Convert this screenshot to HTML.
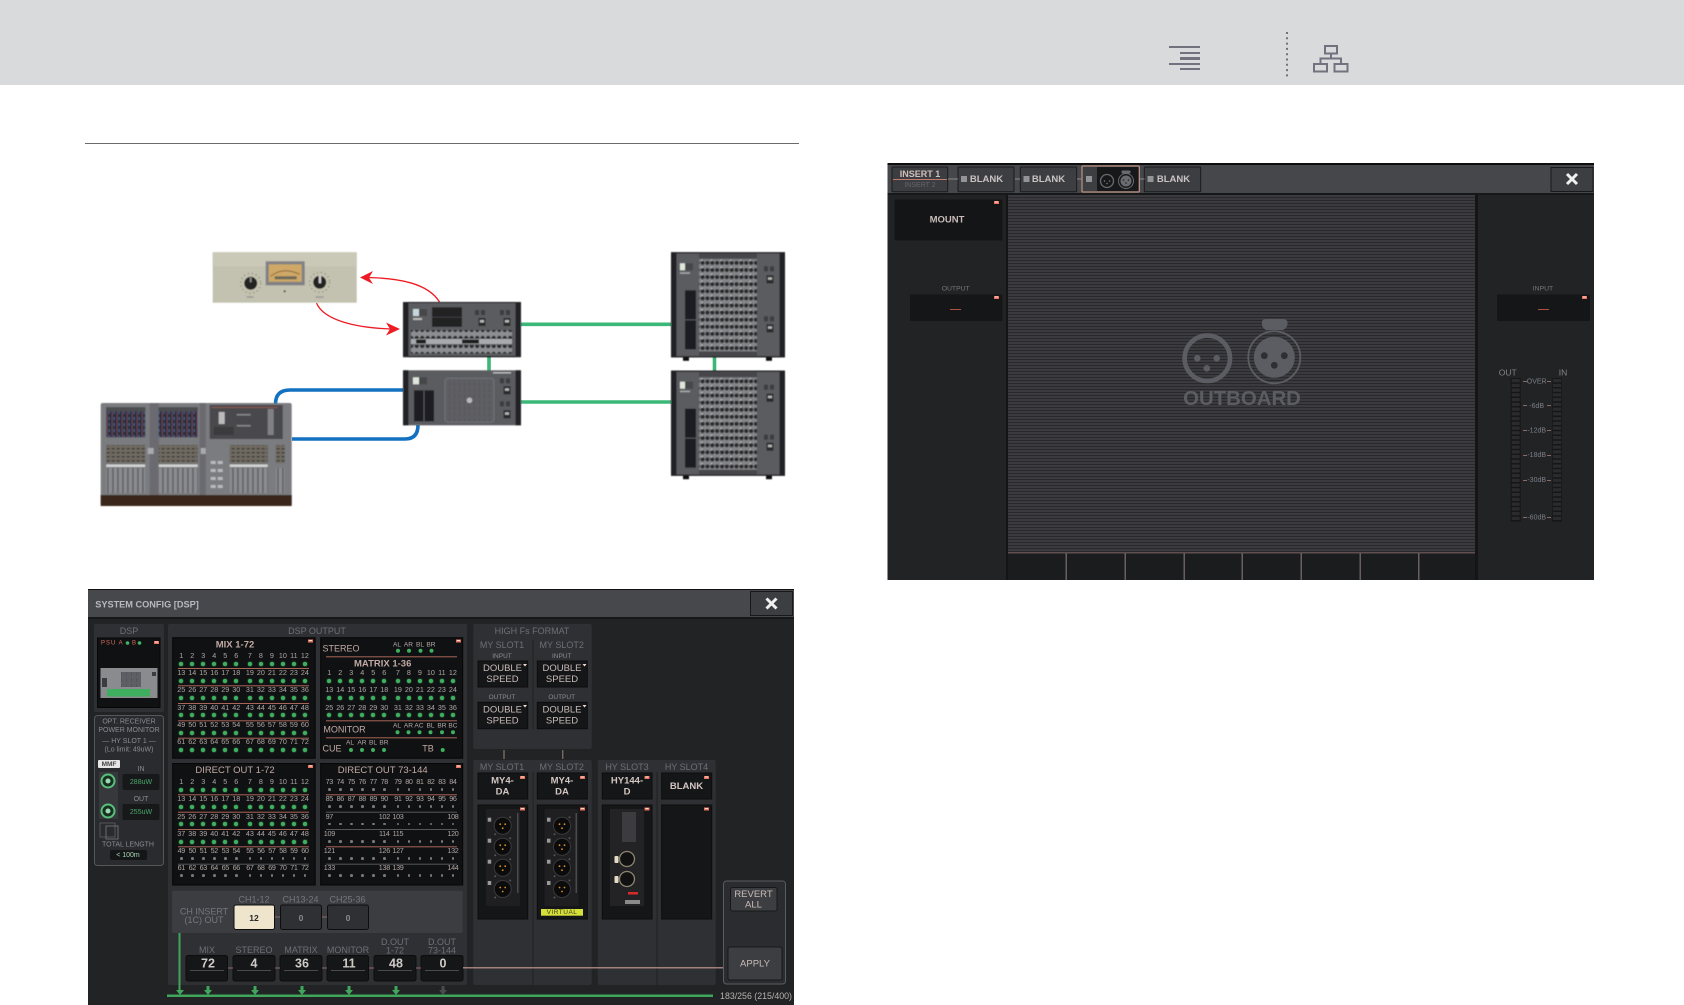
<!DOCTYPE html>
<html><head><meta charset="utf-8"><style>
html,body{margin:0;padding:0;background:#fff;width:1684px;height:1005px;overflow:hidden}
body{position:relative;font-family:"Liberation Sans",sans-serif}
#w{position:absolute;left:0;top:0;width:1684px;height:1005px;filter:blur(.3px)}
svg.m{position:absolute;left:0;top:0}
svg text{font-family:"Liberation Sans",sans-serif;text-anchor:middle;dominant-baseline:central;transform:translate(0,.6px)}
.l{fill:#6e6f77;font-size:9px}
.s{fill:#8b8b92;font-size:7px}
.w{fill:#c9bcb8;font-size:9.5px}
.b{fill:#d2c6c2;font-size:9.5px;font-weight:bold}
.v{fill:#cfc9c6;font-size:12.5px;font-weight:bold}
.y{fill:#c2aaa4;font-size:10px}
.q{fill:#b5aaa7;font-size:6.6px}
.k{fill:#151618;stroke:#0d0d0e;stroke-width:1}
.p{fill:#101113;stroke:#060607;stroke-width:1}
.d{fill:#2f3033}
.r{position:absolute;height:8px;line-height:8px;font-size:7.2px;color:#b0a6a3;white-space:nowrap}
.r i{position:relative;display:inline-block;width:11px;text-align:center;font-style:normal;vertical-align:top;height:8px}
.r i:nth-child(6){margin-right:2.6px}
.r i::after{content:"";position:absolute;left:3.5px;top:9.5px;width:4px;height:4px;border-radius:50%;background:#3fb05f;box-shadow:0 0 1.5px #4fd070}
.o{letter-spacing:-.3px}
.o i::after{left:4.2px;top:10.2px;width:2.6px;height:2.6px;background:#77777a;box-shadow:none}
</style></head><body><div id="w">
<svg class="m" width="1684" height="1005" viewBox="0 0 1684 1005" xmlns="http://www.w3.org/2000/svg">
<defs>
<filter id="bl"><feGaussianBlur stdDeviation="0.5"/></filter>
<pattern id="j" width="9.7" height="7.1" patternUnits="userSpaceOnUse"><rect width="9.7" height="7.1" fill="#85868a"/><circle cx="2.500" cy="3.500" r="2.100" fill="#29292c"/><circle cx="7.300" cy="3.500" r="2.100" fill="#29292c"/><circle cx="1.800" cy=".8" r=".6" fill="#e6e6e6"/></pattern>
<pattern id="j2" width="5.5" height="8" patternUnits="userSpaceOnUse"><rect width="5.5" height="8" fill="#8d8e92"/><circle cx="2.7" cy="4" r="2.2" fill="#2b2b2e"/></pattern>
<pattern id="fd" width="5" height="8" patternUnits="userSpaceOnUse"><rect width="5" height="8" fill="#8b8c90"/><rect x="1.5" width="1.4" height="8" fill="#5a5b5f"/></pattern>
<pattern id="fb" width="5" height="4" patternUnits="userSpaceOnUse"><rect width="5" height="4" fill="#6f6b60"/><rect x="1" y="1" width="3" height="1.500" fill="#3c3c3c"/></pattern>
<pattern id="sc" width="5" height="6" patternUnits="userSpaceOnUse"><rect width="5" height="6" fill="#2a2d3a"/><rect x="1" width="1" height="6" fill="#7a4a5a"/><rect x="3" y="2" width="1" height="3" fill="#4a6a9a"/></pattern>
<pattern id="gr" width="5" height="6" patternUnits="userSpaceOnUse"><rect width="5" height="6" fill="#5e5f64"/><rect x="1" width=".8" height="4" fill="#515257"/></pattern>
<pattern id="st" width="3" height="3" patternUnits="userSpaceOnUse"><rect width="3" height="3" fill="#3b3b3f"/><rect y="2" width="3" height="1" fill="#29292c"/></pattern>
<g id="cn"><rect x="-3.500" y="-4" width="7" height="8" fill="#2a2a2c"/><rect x="-2" y="-2" width="4" height="2.500" fill="#b8b8b8"/></g>
<g id="rack">
<rect width="114" height="105" fill="#5a5b60"/><rect width="114" height="1" fill="#000"/><rect y="104" width="114" height="1" fill="#000"/>
<rect width="5.500" height="105" fill="#222326"/><rect x="108.500" width="5.500" height="105" fill="#222326"/>
<rect x="28" y="1" width="58" height="5" fill="#46474b"/><rect x="28" y="99" width="58" height="5" fill="#46474b"/>
<rect x="28" y="7" width="58" height="92" fill="url(#j)"/>
<rect x="9" y="11" width="5" height="7" fill="#dfe7dc"/><rect x="14" y="11" width="8" height="7" fill="#45464a"/>
<rect x="9" y="20" width="10" height="1.500" fill="#aaa"/>
<rect x="14" y="38" width="11" height="59" fill="#1e1e20"/><rect x="14" y="67" width="11" height="1" fill="#5a5b60"/>
<rect x="93" y="14" width="4" height="5" fill="#3c3d41"/><rect x="99" y="14" width="4" height="5" fill="#3c3d41"/>
<rect x="93" y="64" width="4" height="5" fill="#3c3d41"/><rect x="99" y="64" width="4" height="5" fill="#3c3d41"/>
<use href="#cn" x="99" y="27"/><use href="#cn" x="99" y="76"/>
</g>
<g id="feet"><rect x="12" y="105" width="6" height="3.5" fill="#111"/><rect x="95" y="105" width="6" height="3.5" fill="#111"/></g>
<g id="xlr"><circle r="8.500" fill="#0b0b0c" stroke="#3a3a3c" stroke-width="1"/><circle cx="-2.500" cy="-1.500" r=".9" fill="#d8902c"/><circle cx="2.500" cy="-1.500" r=".9" fill="#d8902c"/><circle cy="2.500" r=".9" fill="#d8902c"/><rect x="-15" y="-8" width="3.500" height="4" fill="#999"/><circle cx="-7.500" cy="8.500" r="1" fill="#555"/><circle cx="7.500" cy="-8.500" r="1" fill="#555"/></g>
<g id="card"><rect width="34" height="97" fill="#1f1f21"/><rect x="31" y="4" width="1.500" height="80" fill="#4a4a4d"/></g>
<g id="tg"><rect width="5" height="3" fill="#e8735f"/><rect x="1" y=".5" width="3" height="1" fill="#f7dcd6"/></g>
</defs>

<!-- header -->
<rect width="1684" height="85" fill="#d9dadc"/>
<g fill="#72727f"><rect x="1169" y="46" width="31" height="2"/><rect x="1180" y="52" width="20" height="2"/><rect x="1180" y="57" width="20" height="3"/><rect x="1169" y="63" width="31" height="2"/><rect x="1180" y="68" width="20" height="2"/></g>
<line x1="1287" y1="32" x2="1287" y2="77" stroke="#72727f" stroke-width="2" stroke-dasharray="2 3.3"/>
<g fill="none" stroke="#72727f" stroke-width="2"><rect x="1325" y="46" width="12" height="7.5"/><rect x="1314" y="64" width="13" height="7.5"/><rect x="1334.500" y="64" width="13" height="7.5"/><path d="M1331 53.500V58.500M1320.500 64V58.500H1341V64"/></g>
<rect x="85" y="143" width="714" height="1" fill="#6b6b6b"/>

<!-- diagram -->
<g fill="none" stroke-width="3.6">
<path d="M521 324.300H671M521 402H671" stroke="#3bb777"/>
<path d="M489 356V371M714.500 356V371" stroke="#3bb777"/>
<path d="M403 390H290Q275.500 390 275.500 404M292 439H405Q418 439 418 425" stroke="#1271c0"/>
</g>
<g fill="none" stroke="#ed1c24" stroke-width="1.300"><path d="M439.500 302C428 283 398 278 366 277.500"/><path d="M316.500 303C324 321 358 328 392 329"/></g>
<path d="M360 277.500L373 271L369 277.700L373 284ZM400 329L386 322.500L390 329L386 335.500Z" fill="#ed1c24"/>
<g filter="url(#bl)">
<g transform="translate(212.700 252.300)"><rect width="144" height="50.400" fill="#c3c1af"/><rect width="144" height="14" fill="#cac8b7"/><rect x="53" y="9" width="39" height="24" fill="#808184"/><rect x="56" y="12" width="33" height="17.500" fill="#cfa867"/><path d="M58 24Q70 14 87 22" fill="none" stroke="#8a6a3a"/><rect x="62" y="24" width="22" height="3" fill="#6c6a58"/>
<circle cx="38" cy="31" r="6.500" fill="#242424"/><circle cx="107" cy="30" r="6.500" fill="#242424"/><rect x="106" y="23" width="2.500" height="8" fill="#cfcfcf"/><rect x="37" y="25" width="2" height="5" fill="#888"/><circle cx="38" cy="31" r="10" fill="none" stroke="#6a6a60" stroke-dasharray="1 3"/><circle cx="107" cy="30" r="10" fill="none" stroke="#6a6a60" stroke-dasharray="1 3"/><circle cx="72" cy="39" r="1" fill="#222"/><rect x="34" y="44" width="7" height="1.500" fill="#999"/><rect x="103" y="44" width="8" height="1.500" fill="#999"/></g>

<g transform="translate(403 302)"><rect width="118" height="55" fill="#5a5b60"/><rect width="118" height="1" fill="#000"/><rect y="54" width="118" height="1.200" fill="#000"/><rect width="5.500" height="55" fill="#222326"/><rect x="112.500" width="5.500" height="55" fill="#222326"/>
<rect x="29" y="5.300" width="30" height="9.500" fill="#222224"/><rect x="29" y="15.300" width="30" height="9.500" fill="#222224"/><rect x="10" y="7" width="6" height="7" fill="#c7d6dc"/><rect x="16" y="7" width="8" height="7" fill="#45464a"/><rect x="10" y="16" width="9" height="2" fill="#bbb"/><rect x="72" y="8" width="4" height="5" fill="#3c3d41"/><rect x="78" y="8" width="4" height="5" fill="#3c3d41"/><rect x="97" y="8" width="4" height="5" fill="#3c3d41"/><rect x="103" y="8" width="4" height="5" fill="#3c3d41"/><use href="#cn" x="79" y="20"/><use href="#cn" x="104" y="20"/>
<rect x="8" y="28" width="101" height="8.500" fill="url(#j2)"/><rect x="8" y="43" width="101" height="8.500" fill="url(#j2)"/><rect x="8" y="37" width="101" height="5" fill="#a9aaad"/><rect x="13" y="37.500" width="10" height="4" fill="#1b1b1d"/><rect x="59" y="37.500" width="17" height="4" fill="#1b1b1d"/></g>

<g transform="translate(403 370.300)"><rect width="118" height="55" fill="#5a5b60"/><rect width="5.500" height="55" fill="#222326"/><rect x="112.500" width="5.500" height="55" fill="#222326"/>
<rect x="10" y="7" width="6" height="7" fill="#dfe7dc"/><rect x="16" y="7" width="8" height="7" fill="#45464a"/><rect x="11" y="20" width="20" height="31" fill="#1e1e20"/><rect x="20.500" y="20" width="1" height="31" fill="#5a5b60"/>
<rect x="42" y="8" width="49" height="44" rx="3" fill="url(#gr)" stroke="#737478"/><circle cx="66.500" cy="30" r="2.800" fill="#b9b9b9"/><rect x="97" y="8" width="4" height="5" fill="#3c3d41"/><rect x="103" y="8" width="4" height="5" fill="#3c3d41"/><rect x="97" y="31" width="4" height="5" fill="#3c3d41"/><rect x="103" y="31" width="4" height="5" fill="#3c3d41"/><use href="#cn" x="104" y="20"/><use href="#cn" x="104" y="44"/><rect x="90" y="2" width="18" height="1" fill="#ddd"/></g>

<use href="#rack" x="671" y="252.300"/><use href="#feet" x="671" y="252.300"/>
<use href="#rack" x="671" y="370.700"/><use href="#feet" x="671" y="370.700"/>

<g transform="translate(100.700 403)"><rect width="191" height="103" rx="2" fill="#7a7b7f"/><rect x="49" y="0" width="9" height="92" fill="#6a6b6f"/><rect x="99" y="0" width="6" height="92" fill="#6a6b6f"/>
<rect x="5.500" y="4.300" width="39" height="30" fill="url(#sc)"/><rect x="58" y="4.300" width="39" height="30" fill="url(#sc)"/><rect x="5.500" y="4.300" width="39" height="4" fill="#4c4d50"/><rect x="58" y="4.300" width="39" height="4" fill="#4c4d50"/>
<rect x="109" y="2" width="73" height="34" fill="#48494d"/><rect x="118" y="9" width="6" height="12" fill="#bbb"/><rect x="111" y="4" width="66" height="1" fill="#8c5a50"/><rect x="136" y="11" width="14" height="1.500" fill="#888"/><rect x="136" y="22" width="14" height="1.500" fill="#888"/><rect x="167" y="6" width="6" height="26" fill="#808184"/><rect x="113" y="24" width="20" height="8" fill="#3a3b3e"/>
<rect x="5.500" y="42" width="39" height="18" fill="url(#fb)"/><rect x="58" y="42" width="39" height="18" fill="url(#fb)"/><rect x="129" y="42" width="38" height="18" fill="url(#fb)"/><rect x="175" y="42" width="9" height="18" fill="url(#fb)"/>
<rect x="5.500" y="65" width="39" height="25" fill="url(#fd)"/><rect x="58" y="65" width="39" height="25" fill="url(#fd)"/><rect x="129" y="65" width="38" height="25" fill="url(#fd)"/><rect x="175" y="65" width="9" height="25" fill="url(#fd)"/>
<rect x="5.500" y="61.500" width="39" height="2.500" fill="#d2d2d2"/><rect x="58" y="61.500" width="39" height="2.500" fill="#d2d2d2"/><rect x="129" y="61.500" width="38" height="2.500" fill="#d2d2d2"/>
<rect x="47" y="45" width="6" height="6" fill="#a8a9ab"/><rect x="100" y="45" width="5" height="6" fill="#a8a9ab"/>
<g fill="#b9babc"><rect x="110" y="58" width="5" height="3"/><rect x="117" y="58" width="5" height="3"/><rect x="110" y="66" width="5" height="3"/><rect x="117" y="66" width="5" height="3"/><rect x="110" y="74" width="5" height="3"/><rect x="117" y="74" width="5" height="3"/><rect x="110" y="82" width="5" height="3"/><rect x="117" y="82" width="5" height="3"/></g>
<rect x="0" y="92" width="191" height="11" fill="#3b281b"/></g>
</g>

<!-- SYSTEM CONFIG -->
<rect x="88" y="589" width="706" height="416" fill="#222325"/>
<rect x="88" y="589" width="706" height="1" fill="#111"/>
<rect x="88" y="590" width="706" height="27" fill="#47484c"/><rect x="88" y="617" width="706" height="2" fill="#17181a"/>
<text x="147" y="603.800" fill="#b8b8c0" style="font-size:9.200px;font-weight:bold">SYSTEM CONFIG  [DSP]</text>
<rect x="750.500" y="591.500" width="42" height="24" fill="#3d3e42" stroke="#17181a"/>
<path d="M766.500 598.500L776.500 608.500M776.500 598.500L766.500 608.500" stroke="#f0f0f0" stroke-width="3"/>

<rect x="94" y="624" width="70" height="88" rx="2" class="d"/><text x="129" y="630.500" class="l">DSP</text>
<rect x="97.500" y="638" width="62.500" height="69.500" class="p"/>
<text x="101" y="642.800" style="text-anchor:start;font-size:6px;fill:#d7705f;letter-spacing:1px">PSU A</text>
<circle cx="127.500" cy="643" r="1.800" fill="#45b565"/><text x="134" y="642.800" style="font-size:6px;fill:#d7705f">B</text><circle cx="139.500" cy="643" r="1.800" fill="#45b565"/>
<use href="#tg" x="154" y="641"/>
<rect x="100.500" y="668" width="57" height="30" fill="#8a8b8f"/><rect x="121" y="672" width="20" height="15" fill="url(#gr)"/><rect x="107" y="689" width="43" height="7.500" fill="#3fae5e"/><rect x="102" y="678" width="5" height="9" fill="#3a3b3e"/><rect x="152" y="672" width="4" height="4" fill="#3a3b3e"/>

<rect x="94.500" y="715.500" width="69" height="150" rx="3" fill="#2a2b2e" stroke="#56575b"/>
<text x="129" y="721.500" class="s">OPT. RECEIVER</text><text x="129" y="730" class="s">POWER MONITOR</text><text x="129" y="741" class="s">— HY SLOT 1 —</text><text x="129" y="749.500" class="s">(Lo limit: 49uW)</text>
<rect x="98" y="760" width="22" height="8" rx="1" fill="#e6e6e6"/><text x="109" y="764" style="font-size:6.500px;font-weight:bold;fill:#444">MMF</text>
<rect x="99" y="772" width="19" height="47" fill="#37383b"/>
<circle cx="108" cy="781" r="6.500" fill="#173020" stroke="#58c07c" stroke-width="2"/><circle cx="108" cy="781" r="2.500" fill="#9adcb0"/>
<circle cx="108" cy="811" r="6.500" fill="#173020" stroke="#58c07c" stroke-width="2"/><circle cx="108" cy="811" r="2.500" fill="#9adcb0"/>
<rect x="100" y="823" width="15" height="14" fill="none" stroke="#55565a"/><rect x="106" y="826" width="12" height="13" fill="none" stroke="#6a6b6f"/>
<text x="141" y="769" class="s">IN</text><rect x="122.500" y="774" width="37" height="16" rx="2" fill="#17181a"/><text x="141" y="782" style="font-size:7px;fill:#4aa86a">288uW</text>
<text x="141" y="799" class="s">OUT</text><rect x="122.500" y="804" width="37" height="16" rx="2" fill="#17181a"/><text x="141" y="812" style="font-size:7px;fill:#4aa86a">255uW</text>
<text x="128" y="844.500" class="s">TOTAL LENGTH</text><rect x="110" y="850" width="37" height="10" rx="2" fill="#141517"/><text x="128" y="855" style="font-size:7px;fill:#a9d6b4">&lt; 100m</text>

<rect x="168" y="624" width="299" height="361" rx="2" class="d"/><text x="317" y="630.500" class="l">DSP OUTPUT</text>
<rect x="172.700" y="637.700" width="142.500" height="120.500" class="p"/>
<rect x="320.700" y="637.700" width="142" height="120.500" class="p"/>
<rect x="172.700" y="763.500" width="142.500" height="121.500" class="p"/>
<rect x="320.700" y="763.500" width="142" height="121.500" class="p"/>
<use href="#tg" x="308" y="639.500"/><use href="#tg" x="456" y="639.500"/><use href="#tg" x="308" y="765"/><use href="#tg" x="456" y="765"/>
<text x="235" y="644.200" class="y" style="font-size:9.500px;font-weight:bold">MIX 1-72</text>
<text x="341" y="648" class="y" style="font-size:9px">STEREO</text>
<text x="382.700" y="663.500" class="y" style="font-size:9.500px;font-weight:bold">MATRIX 1-36</text>
<text x="344.500" y="729" class="y" style="font-size:9px">MONITOR</text><text x="332" y="747.700" class="y" style="font-size:9px">CUE</text><text x="428" y="748" class="y" style="font-size:9px">TB</text>
<text x="235" y="770" class="y" style="font-size:9.500px">DIRECT OUT 1-72</text><text x="382.700" y="770" class="y" style="font-size:9.500px">DIRECT OUT 73-144</text>
<text x="397" y="644.300" class="q">AL</text><text x="408.500" y="644.300" class="q">AR</text><text x="420" y="644.300" class="q">BL</text><text x="431" y="644.300" class="q">BR</text>
<text x="397" y="725.300" class="q">AL</text><text x="408.500" y="725.300" class="q">AR</text><text x="419" y="725.300" class="q">AC</text><text x="430.500" y="725.300" class="q">BL</text><text x="442" y="725.300" class="q">BR</text><text x="453" y="725.300" class="q">BC</text>
<text x="350" y="742.300" class="q">AL</text><text x="362" y="742.300" class="q">AR</text><text x="373" y="742.300" class="q">BL</text><text x="384" y="742.300" class="q">BR</text>
<g fill="#3fb05f">
<circle cx="398" cy="650.700" r="2"/><circle cx="409" cy="650.700" r="2"/><circle cx="420.500" cy="650.700" r="2"/><circle cx="431.500" cy="650.700" r="2"/>
<circle cx="397.500" cy="732.300" r="2"/><circle cx="408.500" cy="732.300" r="2"/><circle cx="419.500" cy="732.300" r="2"/><circle cx="430.500" cy="732.300" r="2"/><circle cx="442" cy="732.300" r="2"/><circle cx="453" cy="732.300" r="2"/>
<circle cx="351" cy="750" r="2"/><circle cx="362" cy="750" r="2"/><circle cx="373" cy="750" r="2"/><circle cx="384" cy="750" r="2"/><circle cx="442.700" cy="750" r="2"/>
</g>
<g fill="#a86457">
<rect x="178" y="668" width="131" height="1"/><rect x="178" y="685.300" width="131" height="1"/><rect x="178" y="703" width="131" height="1"/><rect x="178" y="720.300" width="131" height="1"/><rect x="178" y="737.700" width="131" height="1"/>
<rect x="326" y="656.300" width="131" height="1"/><rect x="326" y="720.300" width="131" height="1"/><rect x="326" y="737.300" width="131" height="1"/>
<rect x="178" y="794.300" width="131" height="1"/><rect x="178" y="811.700" width="131" height="1"/><rect x="178" y="829" width="131" height="1"/><rect x="178" y="846.300" width="131" height="1"/>
<rect x="326" y="794.300" width="131" height="1"/><rect x="326" y="846.300" width="131" height="1"/>
</g>
<g fill="#55565a"><rect x="178" y="863.700" width="131" height="1"/><rect x="326" y="811.700" width="131" height="1"/><rect x="326" y="829" width="131" height="1"/><rect x="326" y="863.700" width="131" height="1"/></g>

<rect x="172" y="890.700" width="290.700" height="42.300" rx="2" fill="#3c3d41"/>
<text x="204" y="910.700" style="font-size:9px;fill:#76777e">CH INSERT</text><text x="204" y="919.500" style="font-size:9px;fill:#76777e">(1C) OUT</text>
<text x="254" y="899" style="font-size:9px;fill:#76777e">CH1-12</text><text x="300.500" y="899" style="font-size:9px;fill:#76777e">CH13-24</text><text x="347.500" y="899" style="font-size:9px;fill:#76777e">CH25-36</text>
<rect x="234" y="905" width="40.500" height="24.500" rx="2" fill="#efe5cd" stroke="#0e0e0f"/><text x="254" y="917.500" style="font-size:8.500px;font-weight:bold;fill:#262626">12</text>
<rect x="280.500" y="905" width="41" height="24.500" rx="2" fill="#2f3033" stroke="#0e0e0f"/><text x="301" y="917.500" style="font-size:8.500px;font-weight:bold;fill:#8b8b8b">0</text>
<rect x="327.500" y="905" width="41" height="24.500" rx="2" fill="#2f3033" stroke="#0e0e0f"/><text x="348" y="917.500" style="font-size:8.500px;font-weight:bold;fill:#8b8b8b">0</text>
<rect x="275" y="916.500" width="5" height="1" fill="#8c6a64"/><rect x="322" y="916.500" width="5" height="1" fill="#8c6a64"/>

<text x="207" y="949.500" class="l">MIX</text><text x="254" y="949.500" class="l">STEREO</text><text x="301" y="949.500" class="l">MATRIX</text><text x="348" y="949.500" class="l">MONITOR</text><text x="395" y="941.500" class="l">D.OUT</text><text x="395" y="950" class="l">1-72</text><text x="442" y="941.500" class="l">D.OUT</text><text x="442" y="950" class="l">73-144</text>
<g class="k"><rect x="186" y="955.500" width="41.500" height="25.500" rx="2"/><rect x="233" y="955.500" width="42" height="25.500" rx="2"/><rect x="280" y="955.500" width="42" height="25.500" rx="2"/><rect x="327" y="955.500" width="41.500" height="25.500" rx="2"/><rect x="374" y="955.500" width="42" height="25.500" rx="2"/><rect x="421" y="955.500" width="42" height="25.500" rx="2"/></g>
<text x="208" y="963" class="v">72</text><text x="254" y="963" class="v">4</text><text x="302" y="963" class="v">36</text><text x="349" y="963" class="v">11</text><text x="396" y="963" class="v">48</text><text x="443" y="963" class="v">0</text>
<g fill="#4a4b4f"><rect x="190" y="970" width="34" height="1"/><rect x="237" y="970" width="34" height="1"/><rect x="284" y="970" width="34" height="1"/><rect x="331" y="970" width="34" height="1"/><rect x="378" y="970" width="34" height="1"/><rect x="425" y="970" width="34" height="1"/></g>
<g fill="#8c6a64"><rect x="228" y="967.500" width="5" height="1"/><rect x="275" y="967.500" width="5" height="1"/><rect x="322" y="967.500" width="5" height="1"/><rect x="369" y="967.500" width="5" height="1"/><rect x="416" y="967.500" width="5" height="1"/></g>

<rect x="473.300" y="624" width="118.400" height="125" rx="2" class="d"/><rect x="532.500" y="640" width="1" height="89" fill="#1e1f21"/>
<text x="532" y="630.500" class="l">HIGH Fs FORMAT</text>
<text x="502" y="644.500" class="l">MY SLOT1</text><text x="561.700" y="644.500" class="l">MY SLOT2</text>
<text x="502" y="656" class="s" style="font-size:6.500px">INPUT</text><text x="561.700" y="656" class="s" style="font-size:6.500px">INPUT</text><text x="502" y="697" class="s" style="font-size:6.500px">OUTPUT</text><text x="561.700" y="697" class="s" style="font-size:6.500px">OUTPUT</text>
<g class="k"><rect x="478" y="661" width="49.700" height="26"/><rect x="537.300" y="661" width="50" height="26"/><rect x="478" y="702.300" width="49.700" height="26.400"/><rect x="537.300" y="702.300" width="50" height="26.400"/></g>
<text x="502.500" y="668" class="w">DOUBLE</text><text x="502.500" y="679" class="w">SPEED</text><text x="562" y="668" class="w">DOUBLE</text><text x="562" y="679" class="w">SPEED</text>
<text x="502.500" y="709.500" class="w">DOUBLE</text><text x="502.500" y="720.500" class="w">SPEED</text><text x="562" y="709.500" class="w">DOUBLE</text><text x="562" y="720.500" class="w">SPEED</text>
<g fill="#f0d8d0"><path d="M523 664h4l-2 2.500z"/><path d="M582.500 664h4l-2 2.500z"/><path d="M523 705h4l-2 2.500z"/><path d="M582.500 705h4l-2 2.500z"/></g>
<rect x="503.500" y="750" width="1" height="9" fill="#9c8680"/><rect x="562.300" y="750" width="1" height="9" fill="#9c8680"/>

<rect x="473.300" y="760" width="118.400" height="225" rx="2" class="d"/><rect x="532.500" y="772" width="1" height="213" fill="#1e1f21"/>
<rect x="597.700" y="760" width="118" height="225" rx="2" class="d"/><rect x="656.500" y="772" width="1" height="213" fill="#1e1f21"/>
<text x="502" y="766.500" class="l">MY SLOT1</text><text x="561.700" y="766.500" class="l">MY SLOT2</text><text x="627" y="766.500" class="l">HY SLOT3</text><text x="686.500" y="766.500" class="l">HY SLOT4</text>
<g class="k"><rect x="478" y="773" width="49.700" height="26"/><rect x="537.300" y="773" width="50" height="26"/><rect x="602.300" y="773" width="49.700" height="26"/><rect x="661.700" y="773" width="50" height="26"/>
<rect x="478" y="805" width="49.700" height="114"/><rect x="537.300" y="805" width="50" height="114"/><rect x="602.300" y="805" width="49.700" height="114"/><rect x="661.700" y="805" width="50" height="114"/></g>
<text x="502.500" y="780.500" class="b">MY4-</text><text x="502.500" y="791.500" class="b">DA</text><text x="562" y="780.500" class="b">MY4-</text><text x="562" y="791.500" class="b">DA</text><text x="627" y="780.500" class="b">HY144-</text><text x="627" y="791.500" class="b">D</text><text x="686.500" y="786" class="b">BLANK</text>
<use href="#tg" x="520" y="776"/><use href="#tg" x="580" y="776"/><use href="#tg" x="644.500" y="776"/><use href="#tg" x="704" y="776"/><use href="#tg" x="520" y="807.500"/><use href="#tg" x="580" y="807.500"/><use href="#tg" x="644.500" y="807.500"/><use href="#tg" x="704" y="807.500"/>
<use href="#card" x="486" y="809"/><use href="#card" x="544.500" y="809"/>
<use href="#xlr" x="502.700" y="825.700"/><use href="#xlr" x="502.700" y="846.700"/><use href="#xlr" x="502.700" y="867.700"/><use href="#xlr" x="502.700" y="889"/>
<use href="#xlr" x="562" y="825.700"/><use href="#xlr" x="562" y="846.700"/><use href="#xlr" x="562" y="867.700"/><use href="#xlr" x="562" y="889"/>
<rect x="541" y="909" width="42" height="6.700" fill="#d6e03a"/><text x="562" y="912" style="font-size:6.500px;fill:#3b3b20;letter-spacing:.5px">VIRTUAL</text>
<rect x="610" y="809" width="34" height="97" fill="#232325"/><rect x="622" y="812" width="14" height="30" fill="#3c3c40"/>
<circle cx="627" cy="859" r="7.500" fill="#111" stroke="#8f8570" stroke-width="1.300"/><circle cx="627" cy="879" r="7.500" fill="#111" stroke="#8f8570" stroke-width="1.300"/><rect x="614.500" y="856" width="4" height="7" rx="1" fill="#e3dcc8"/><rect x="614.500" y="876" width="4" height="7" rx="1" fill="#e3dcc8"/><rect x="628" y="892" width="10" height="2.500" fill="#d92a2a"/><rect x="625" y="900" width="15" height="4" fill="#8a8a8a"/>

<rect x="723.500" y="881" width="62" height="103" rx="3" fill="#2b2c2f" stroke="#5b5c60"/>
<rect x="730.500" y="887.500" width="46.500" height="23.500" rx="2" fill="#3d3e42" stroke="#17181a"/>
<text x="753.500" y="894" class="w">REVERT</text><text x="753.500" y="904.500" class="w">ALL</text>
<rect x="728" y="947" width="54" height="33" rx="2" fill="#3d3e42" stroke="#17181a"/><text x="755" y="963.500" class="w">APPLY</text>
<rect x="463" y="967.200" width="260" height="1.200" fill="#c2968e"/>

<rect x="167" y="994.500" width="546" height="2.500" fill="#3fa65c"/>
<rect x="178.500" y="933" width="2" height="60" fill="#3fa65c"/>
<path d="M176 990H184L180 995Z" fill="#3fa65c"/>
<g fill="#3fa65c"><path d="M206.500 986H209.500V990H212L208 995L204 990H206.500Z"/><path d="M253.500 986H256.500V990H259L255 995L251 990H253.500Z"/><path d="M300.500 986H303.500V990H306L302 995L298 990H300.500Z"/><path d="M347.500 986H350.500V990H353L349 995L345 990H347.500Z"/><path d="M394.500 986H397.500V990H400L396 995L392 990H394.500Z"/></g>
<path d="M441.500 986H444.500V990H447L443 995L439 990H441.500Z" fill="#4a4b4f"/>
<text x="756" y="995.500" style="font-size:8.800px;fill:#b8b2b0">183/256  (215/400)</text>

<!-- OUTBOARD panel -->
<rect x="887.500" y="163" width="706.500" height="417" fill="#222325"/>
<rect x="887.500" y="163" width="706.500" height="2" fill="#0e0e0f"/>
<rect x="887.500" y="165" width="706.500" height="28" fill="#46474b"/><rect x="887.500" y="193" width="706.500" height="2" fill="#17181a"/>
<rect x="892" y="167" width="55.700" height="24.700" rx="1" fill="#3c3d41" stroke="#1b1b1d"/>
<text x="920" y="173.500" style="font-size:9px;font-weight:bold;fill:#d0c0bc">INSERT 1</text><rect x="893" y="179" width="54" height="1" fill="#c07a6e"/><text x="920" y="185" style="font-size:7px;fill:#65666c">INSERT 2</text>
<g fill="#3d3e42" stroke="#1b1b1d"><rect x="958" y="167" width="56" height="24.700" rx="1"/><rect x="1020.300" y="167" width="56.400" height="24.700" rx="1"/><rect x="1144.300" y="167" width="56.400" height="24.700" rx="1"/></g>
<rect x="1082" y="166" width="57.300" height="26" rx="1" fill="#3d3e42" stroke="#d8a08e"/>
<rect x="1097" y="167" width="41.500" height="24" fill="#17181a"/>
<g fill="#949498"><rect x="961" y="176" width="6" height="6"/><rect x="1023.500" y="176" width="6" height="6"/><rect x="1086" y="176" width="6" height="6"/><rect x="1147.500" y="176" width="6" height="6"/></g>
<g fill="#8a8a8f"><rect x="948" y="178.500" width="10" height="1"/><rect x="1015" y="178.500" width="5" height="1"/><rect x="1077" y="178.500" width="5" height="1"/><rect x="1139.500" y="178.500" width="5" height="1"/></g>
<text x="986.500" y="179" style="font-size:9.500px;font-weight:bold;fill:#c9c3c4">BLANK</text><text x="1048.500" y="179" style="font-size:9.500px;font-weight:bold;fill:#c9c3c4">BLANK</text><text x="1173.500" y="179" style="font-size:9.500px;font-weight:bold;fill:#c9c3c4">BLANK</text>
<circle cx="1107" cy="181" r="6.500" fill="none" stroke="#6a6b70" stroke-width="1.300"/><circle cx="1104.500" cy="181" r=".8" fill="#7a7b80"/><circle cx="1109.500" cy="181" r=".8" fill="#7a7b80"/><circle cx="1107" cy="183.500" r=".8" fill="#7a7b80"/>
<circle cx="1126" cy="181" r="7.500" fill="none" stroke="#6a6b70"/><circle cx="1126" cy="181" r="5.500" fill="#6a6b70"/><rect x="1121.500" y="170.500" width="9" height="3" rx="1" fill="#6a6b70"/><circle cx="1123.500" cy="180" r=".8" fill="#222"/><circle cx="1128.500" cy="180" r=".8" fill="#222"/><circle cx="1126" cy="183" r=".8" fill="#222"/>
<rect x="1551" y="167.500" width="42" height="24" fill="#3d3e42" stroke="#17181a"/>
<path d="M1567 174L1577 184M1577 174L1567 184" stroke="#f0f0f0" stroke-width="3"/>

<rect x="894.500" y="199.500" width="108" height="41" rx="1" fill="#141517"/><text x="947" y="219.500" style="font-size:9.500px;font-weight:bold;fill:#c9bcb8">MOUNT</text><use href="#tg" x="994" y="201"/>
<text x="955.700" y="288.500" style="font-size:6.800px;fill:#77787e">OUTPUT</text>
<rect x="910" y="294.500" width="92.500" height="26.500" rx="1" fill="#151618"/><rect x="950" y="309" width="11" height="1" fill="#b05040"/><use href="#tg" x="994" y="296"/>
<rect x="1006" y="195" width="2" height="385" fill="#151516"/>
<rect x="1008" y="195" width="467" height="357" fill="url(#st)"/>
<rect x="1475" y="195" width="3" height="385" fill="#151516"/>
<rect x="1008" y="552" width="467" height="1.500" fill="#5e5050"/>
<rect x="1008" y="553.500" width="467" height="26.500" fill="#1b1c1e"/>
<g fill="#6b5f5d"><rect x="1065.500" y="553" width="1.500" height="27"/><rect x="1124.500" y="553" width="1.500" height="27"/><rect x="1183.500" y="553" width="1.500" height="27"/><rect x="1241.500" y="553" width="1.500" height="27"/><rect x="1300.500" y="553" width="1.500" height="27"/><rect x="1359.500" y="553" width="1.500" height="27"/><rect x="1418" y="553" width="1.500" height="27"/></g>

<circle cx="1207.300" cy="358.300" r="22.700" fill="none" stroke="#5c5d62" stroke-width="4.600"/><circle cx="1197.300" cy="358.300" r="3.300" fill="#5c5d62"/><circle cx="1216.700" cy="358.300" r="3.300" fill="#5c5d62"/><circle cx="1206.800" cy="368.300" r="3.300" fill="#5c5d62"/>
<circle cx="1274.300" cy="357.300" r="26" fill="none" stroke="#5c5d62" stroke-width="1.800"/><circle cx="1274.300" cy="357.300" r="20.500" fill="#5c5d62"/>
<path d="M1262 324Q1261 319 1266 319H1283Q1288 319 1287.500 324Q1287 328 1283 330L1266 330Q1262 328 1262 324Z" fill="#5c5d62"/>
<circle cx="1264.300" cy="355.700" r="3.400" fill="#2f2f33"/><circle cx="1284.300" cy="355.700" r="3.400" fill="#2f2f33"/><circle cx="1274.300" cy="365.300" r="3.400" fill="#2f2f33"/>
<text x="1242" y="398.500" style="font-size:20.400px;font-weight:bold;fill:#5c5d62">OUTBOARD</text>

<text x="1543" y="288.500" style="font-size:6.800px;fill:#77787e">INPUT</text>
<rect x="1497" y="294.500" width="93" height="26.500" rx="1" fill="#151618"/><rect x="1538" y="309" width="11" height="1" fill="#b05040"/><use href="#tg" x="1582" y="296"/>

<text x="1507.700" y="371.700" style="font-size:8.500px;fill:#84848a">OUT</text><text x="1563" y="371.700" style="font-size:8.500px;fill:#84848a">IN</text>
<rect x="1510.700" y="378" width="10" height="143.700" fill="#161618"/><rect x="1552.300" y="378" width="9.400" height="143.700" fill="#161618"/>
<line x1="1515.700" y1="379" x2="1515.700" y2="521" stroke="#2b2b2d" stroke-width="8" stroke-dasharray="3.200 1.550"/>
<line x1="1557" y1="379" x2="1557" y2="521" stroke="#2b2b2d" stroke-width="8" stroke-dasharray="3.200 1.550"/>
<text x="1536.700" y="381.500" style="font-size:7px;fill:#7d7f88">OVER</text><text x="1536.700" y="405.700" style="font-size:7px;fill:#7d7f88">-6dB</text><text x="1536.700" y="430.500" style="font-size:7px;fill:#7d7f88">-12dB</text><text x="1536.700" y="455" style="font-size:7px;fill:#7d7f88">-18dB</text><text x="1536.700" y="480" style="font-size:7px;fill:#7d7f88">-30dB</text><text x="1536.700" y="517.500" style="font-size:7px;fill:#7d7f88">-60dB</text>
<g fill="#8a6a66"><rect x="1523" y="381" width="4" height="1"/><rect x="1547" y="381" width="4" height="1"/><rect x="1523" y="405" width="4" height="1"/><rect x="1547" y="405" width="4" height="1"/><rect x="1523" y="430" width="4" height="1"/><rect x="1547" y="430" width="4" height="1"/><rect x="1523" y="455" width="4" height="1"/><rect x="1547" y="455" width="4" height="1"/><rect x="1523" y="480" width="4" height="1"/><rect x="1547" y="480" width="4" height="1"/><rect x="1523" y="517" width="4" height="1"/><rect x="1547" y="517" width="4" height="1"/></g>
</svg>

<!-- MIX 1-72 -->
<div class="r" style="left:175.800px;top:652px"><i>1</i><i>2</i><i>3</i><i>4</i><i>5</i><i>6</i><i>7</i><i>8</i><i>9</i><i>10</i><i>11</i><i>12</i></div>
<div class="r" style="left:175.800px;top:669.300px"><i>13</i><i>14</i><i>15</i><i>16</i><i>17</i><i>18</i><i>19</i><i>20</i><i>21</i><i>22</i><i>23</i><i>24</i></div>
<div class="r" style="left:175.800px;top:686.300px"><i>25</i><i>26</i><i>27</i><i>28</i><i>29</i><i>30</i><i>31</i><i>32</i><i>33</i><i>34</i><i>35</i><i>36</i></div>
<div class="r" style="left:175.800px;top:703.700px"><i>37</i><i>38</i><i>39</i><i>40</i><i>41</i><i>42</i><i>43</i><i>44</i><i>45</i><i>46</i><i>47</i><i>48</i></div>
<div class="r" style="left:175.800px;top:721.300px"><i>49</i><i>50</i><i>51</i><i>52</i><i>53</i><i>54</i><i>55</i><i>56</i><i>57</i><i>58</i><i>59</i><i>60</i></div>
<div class="r" style="left:175.800px;top:738.300px"><i>61</i><i>62</i><i>63</i><i>64</i><i>65</i><i>66</i><i>67</i><i>68</i><i>69</i><i>70</i><i>71</i><i>72</i></div>
<!-- MATRIX 1-36 -->
<div class="r" style="left:323.800px;top:669.300px"><i>1</i><i>2</i><i>3</i><i>4</i><i>5</i><i>6</i><i>7</i><i>8</i><i>9</i><i>10</i><i>11</i><i>12</i></div>
<div class="r" style="left:323.800px;top:686.300px"><i>13</i><i>14</i><i>15</i><i>16</i><i>17</i><i>18</i><i>19</i><i>20</i><i>21</i><i>22</i><i>23</i><i>24</i></div>
<div class="r" style="left:323.800px;top:703.700px"><i>25</i><i>26</i><i>27</i><i>28</i><i>29</i><i>30</i><i>31</i><i>32</i><i>33</i><i>34</i><i>35</i><i>36</i></div>
<!-- DIRECT OUT 1-72 -->
<div class="r" style="left:175.800px;top:778px"><i>1</i><i>2</i><i>3</i><i>4</i><i>5</i><i>6</i><i>7</i><i>8</i><i>9</i><i>10</i><i>11</i><i>12</i></div>
<div class="r" style="left:175.800px;top:795.300px"><i>13</i><i>14</i><i>15</i><i>16</i><i>17</i><i>18</i><i>19</i><i>20</i><i>21</i><i>22</i><i>23</i><i>24</i></div>
<div class="r" style="left:175.800px;top:812.700px"><i>25</i><i>26</i><i>27</i><i>28</i><i>29</i><i>30</i><i>31</i><i>32</i><i>33</i><i>34</i><i>35</i><i>36</i></div>
<div class="r" style="left:175.800px;top:830px"><i>37</i><i>38</i><i>39</i><i>40</i><i>41</i><i>42</i><i>43</i><i>44</i><i>45</i><i>46</i><i>47</i><i>48</i></div>
<div class="r o" style="left:175.800px;top:847px"><i>49</i><i>50</i><i>51</i><i>52</i><i>53</i><i>54</i><i>55</i><i>56</i><i>57</i><i>58</i><i>59</i><i>60</i></div>
<div class="r o" style="left:175.800px;top:864.300px"><i>61</i><i>62</i><i>63</i><i>64</i><i>65</i><i>66</i><i>67</i><i>68</i><i>69</i><i>70</i><i>71</i><i>72</i></div>
<!-- DIRECT OUT 73-144 -->
<div class="r o" style="left:323.800px;top:778px"><i>73</i><i>74</i><i>75</i><i>76</i><i>77</i><i>78</i><i>79</i><i>80</i><i>81</i><i>82</i><i>83</i><i>84</i></div>
<div class="r o" style="left:323.800px;top:795.300px"><i>85</i><i>86</i><i>87</i><i>88</i><i>89</i><i>90</i><i>91</i><i>92</i><i>93</i><i>94</i><i>95</i><i>96</i></div>
<div class="r o" style="left:323.800px;top:812.700px"><i>97</i><i></i><i></i><i></i><i></i><i>102</i><i>103</i><i></i><i></i><i></i><i></i><i>108</i></div>
<div class="r o" style="left:323.800px;top:830px"><i>109</i><i></i><i></i><i></i><i></i><i>114</i><i>115</i><i></i><i></i><i></i><i></i><i>120</i></div>
<div class="r o" style="left:323.800px;top:847px"><i>121</i><i></i><i></i><i></i><i></i><i>126</i><i>127</i><i></i><i></i><i></i><i></i><i>132</i></div>
<div class="r o" style="left:323.800px;top:864.300px"><i>133</i><i></i><i></i><i></i><i></i><i>138</i><i>139</i><i></i><i></i><i></i><i></i><i>144</i></div>
</div></body></html>
